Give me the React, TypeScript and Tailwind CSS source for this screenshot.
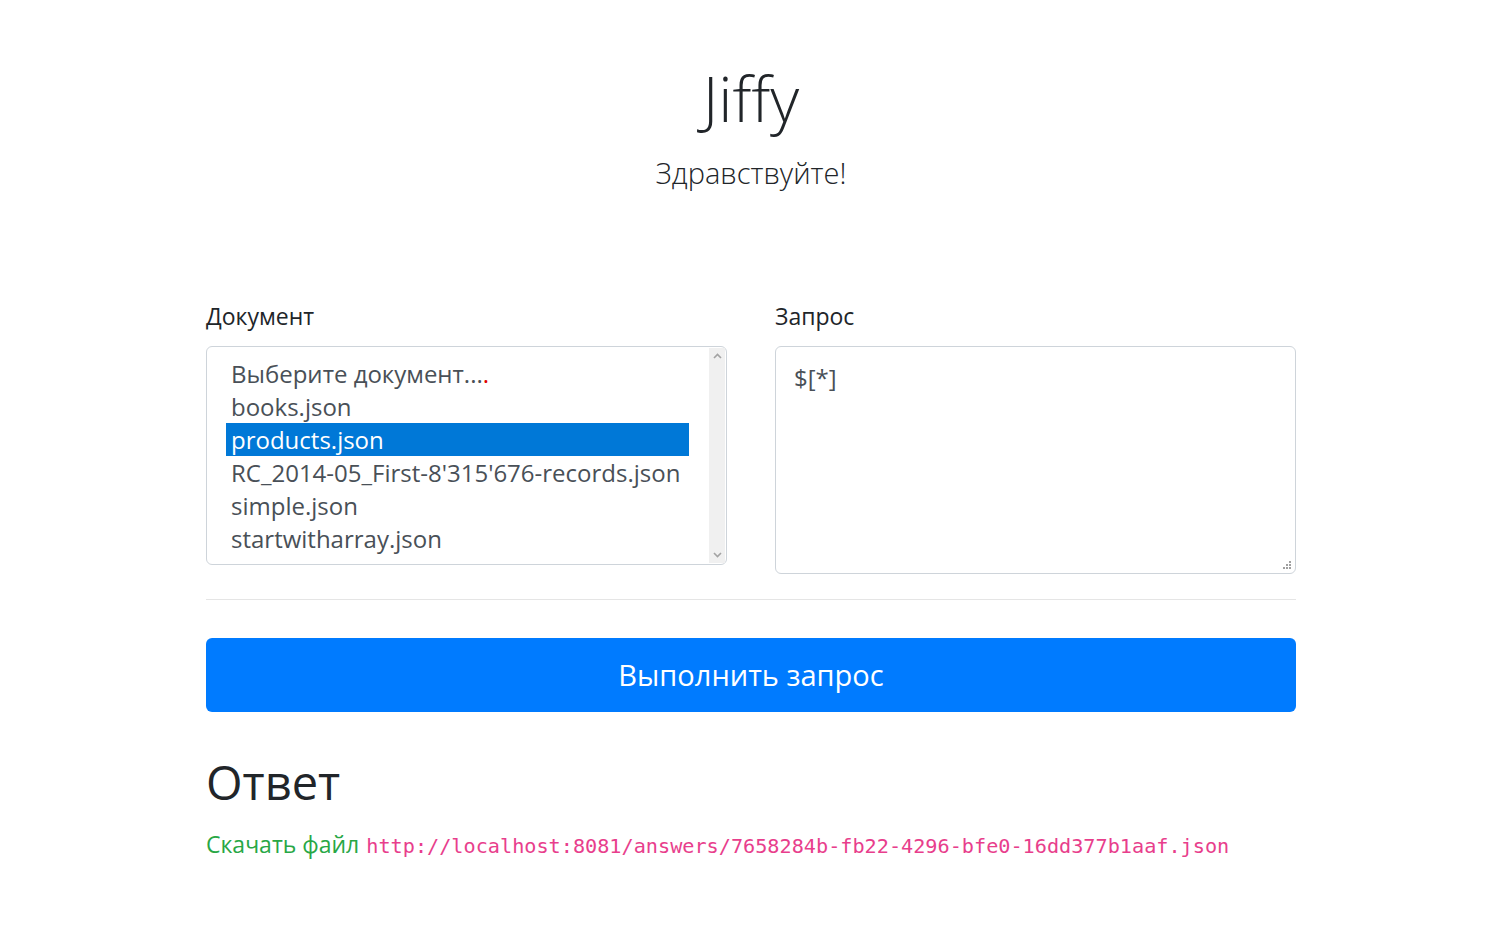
import React from 'react';

const FONT = { fontFamily: '"Open Sans", "Noto Sans", Arial, sans-serif' };

const files = [
  'books.json',
  'products.json',
  "RC_2014-05_First-8'315'676-records.json",
  'simple.json',
  'startwitharray.json',
];

const Chevron: React.FC<{ up?: boolean }> = ({ up }) => (
  <svg width="9" height="6" viewBox="0 0 9 6" className="mx-auto">
    <path
      d={up ? 'M1 5 L4.5 1.5 L8 5' : 'M1 1 L4.5 4.5 L8 1'}
      fill="none"
      stroke="#a3a3a3"
      strokeWidth="1.6"
    />
  </svg>
);

const DocumentList: React.FC<{ selected: string }> = ({ selected }) => (
  <div className="flex h-[219px] rounded-[6px] border border-[#ced4da] bg-white text-[24px] leading-[33px] text-[#495057]">
    <div className="flex-1 pl-[19px] pr-[20px] pt-[10px]">
      <div className="px-[5px]">
        Выберите документ...<span className="text-[#e00000]">.</span>
      </div>
      {files.map((f) => (
        <div
          key={f}
          className={
            f === selected ? 'bg-[#0078d7] px-[5px] text-white' : 'px-[5px]'
          }
        >
          {f}
        </div>
      ))}
    </div>
    <div className="my-[1px] mr-[1px] flex w-[16px] flex-col justify-between bg-[#f0f0f0] py-[5px]">
      <Chevron up />
      <Chevron />
    </div>
  </div>
);

const QueryBox: React.FC<{ value: string }> = ({ value }) => (
  <div className="relative h-[228px] rounded-[6px] border border-[#ced4da] bg-white px-[18px] pt-[13px] text-[24px] leading-[36px] text-[#495057]">
    {value}
    <svg
      width="10"
      height="10"
      viewBox="0 0 10 10"
      className="absolute bottom-[3px] right-[3px]"
    >
      <rect x="7" y="1" width="2" height="2" fill="#a0a0a0" />
      <rect x="4" y="4" width="2" height="2" fill="#a0a0a0" />
      <rect x="7" y="4" width="2" height="2" fill="#a0a0a0" />
      <rect x="1" y="7" width="2" height="2" fill="#a0a0a0" />
      <rect x="4" y="7" width="2" height="2" fill="#a0a0a0" />
      <rect x="7" y="7" width="2" height="2" fill="#a0a0a0" />
    </svg>
  </div>
);

export default function App() {
  return (
    <div className="min-h-[934px] bg-white text-[#212529]" style={FONT}>
      <div className="mx-auto w-[1090px] translate-x-[4px]">
        <header className="flex flex-col items-center pt-[60px]">
          <h1 className="text-[63px] font-light leading-[76px]">Jiffy</h1>
          <p className="mt-[15px] text-[29px] font-light leading-[44px]">Здравствуйте!</p>
        </header>

        <div className="mt-[104px] grid grid-cols-2 gap-[48px]">
          <div>
            <div className="mb-[13px] text-[23px] leading-[34px]">Документ</div>
            <DocumentList selected="products.json" />
          </div>
          <div>
            <div className="mb-[13px] text-[23px] leading-[34px]">Запрос</div>
            <QueryBox value="$[*]" />
          </div>
        </div>

        <hr className="mt-[25px] border-t border-[rgba(0,0,0,0.1)]" />

        <button className="mt-[38px] h-[74px] w-full rounded-[6px] bg-[#007bff] text-[29px] text-white">
          Выполнить запрос
        </button>

        <h2 className="mt-[38px] text-[47px] leading-[64px]">Ответ</h2>

        <div className="mt-[12px] flex items-baseline gap-[7px] text-[23px] leading-[36px]">
          <span className="text-[#28a745]">Скачать файл</span>
          <code
            className="text-[20.2px] text-[#e83e8c]"
            style={{ fontFamily: '"DejaVu Sans Mono", "Liberation Mono", monospace' }}
          >
            http://localhost:8081/answers/7658284b-fb22-4296-bfe0-16dd377b1aaf.json
          </code>
        </div>
      </div>
    </div>
  );
}
